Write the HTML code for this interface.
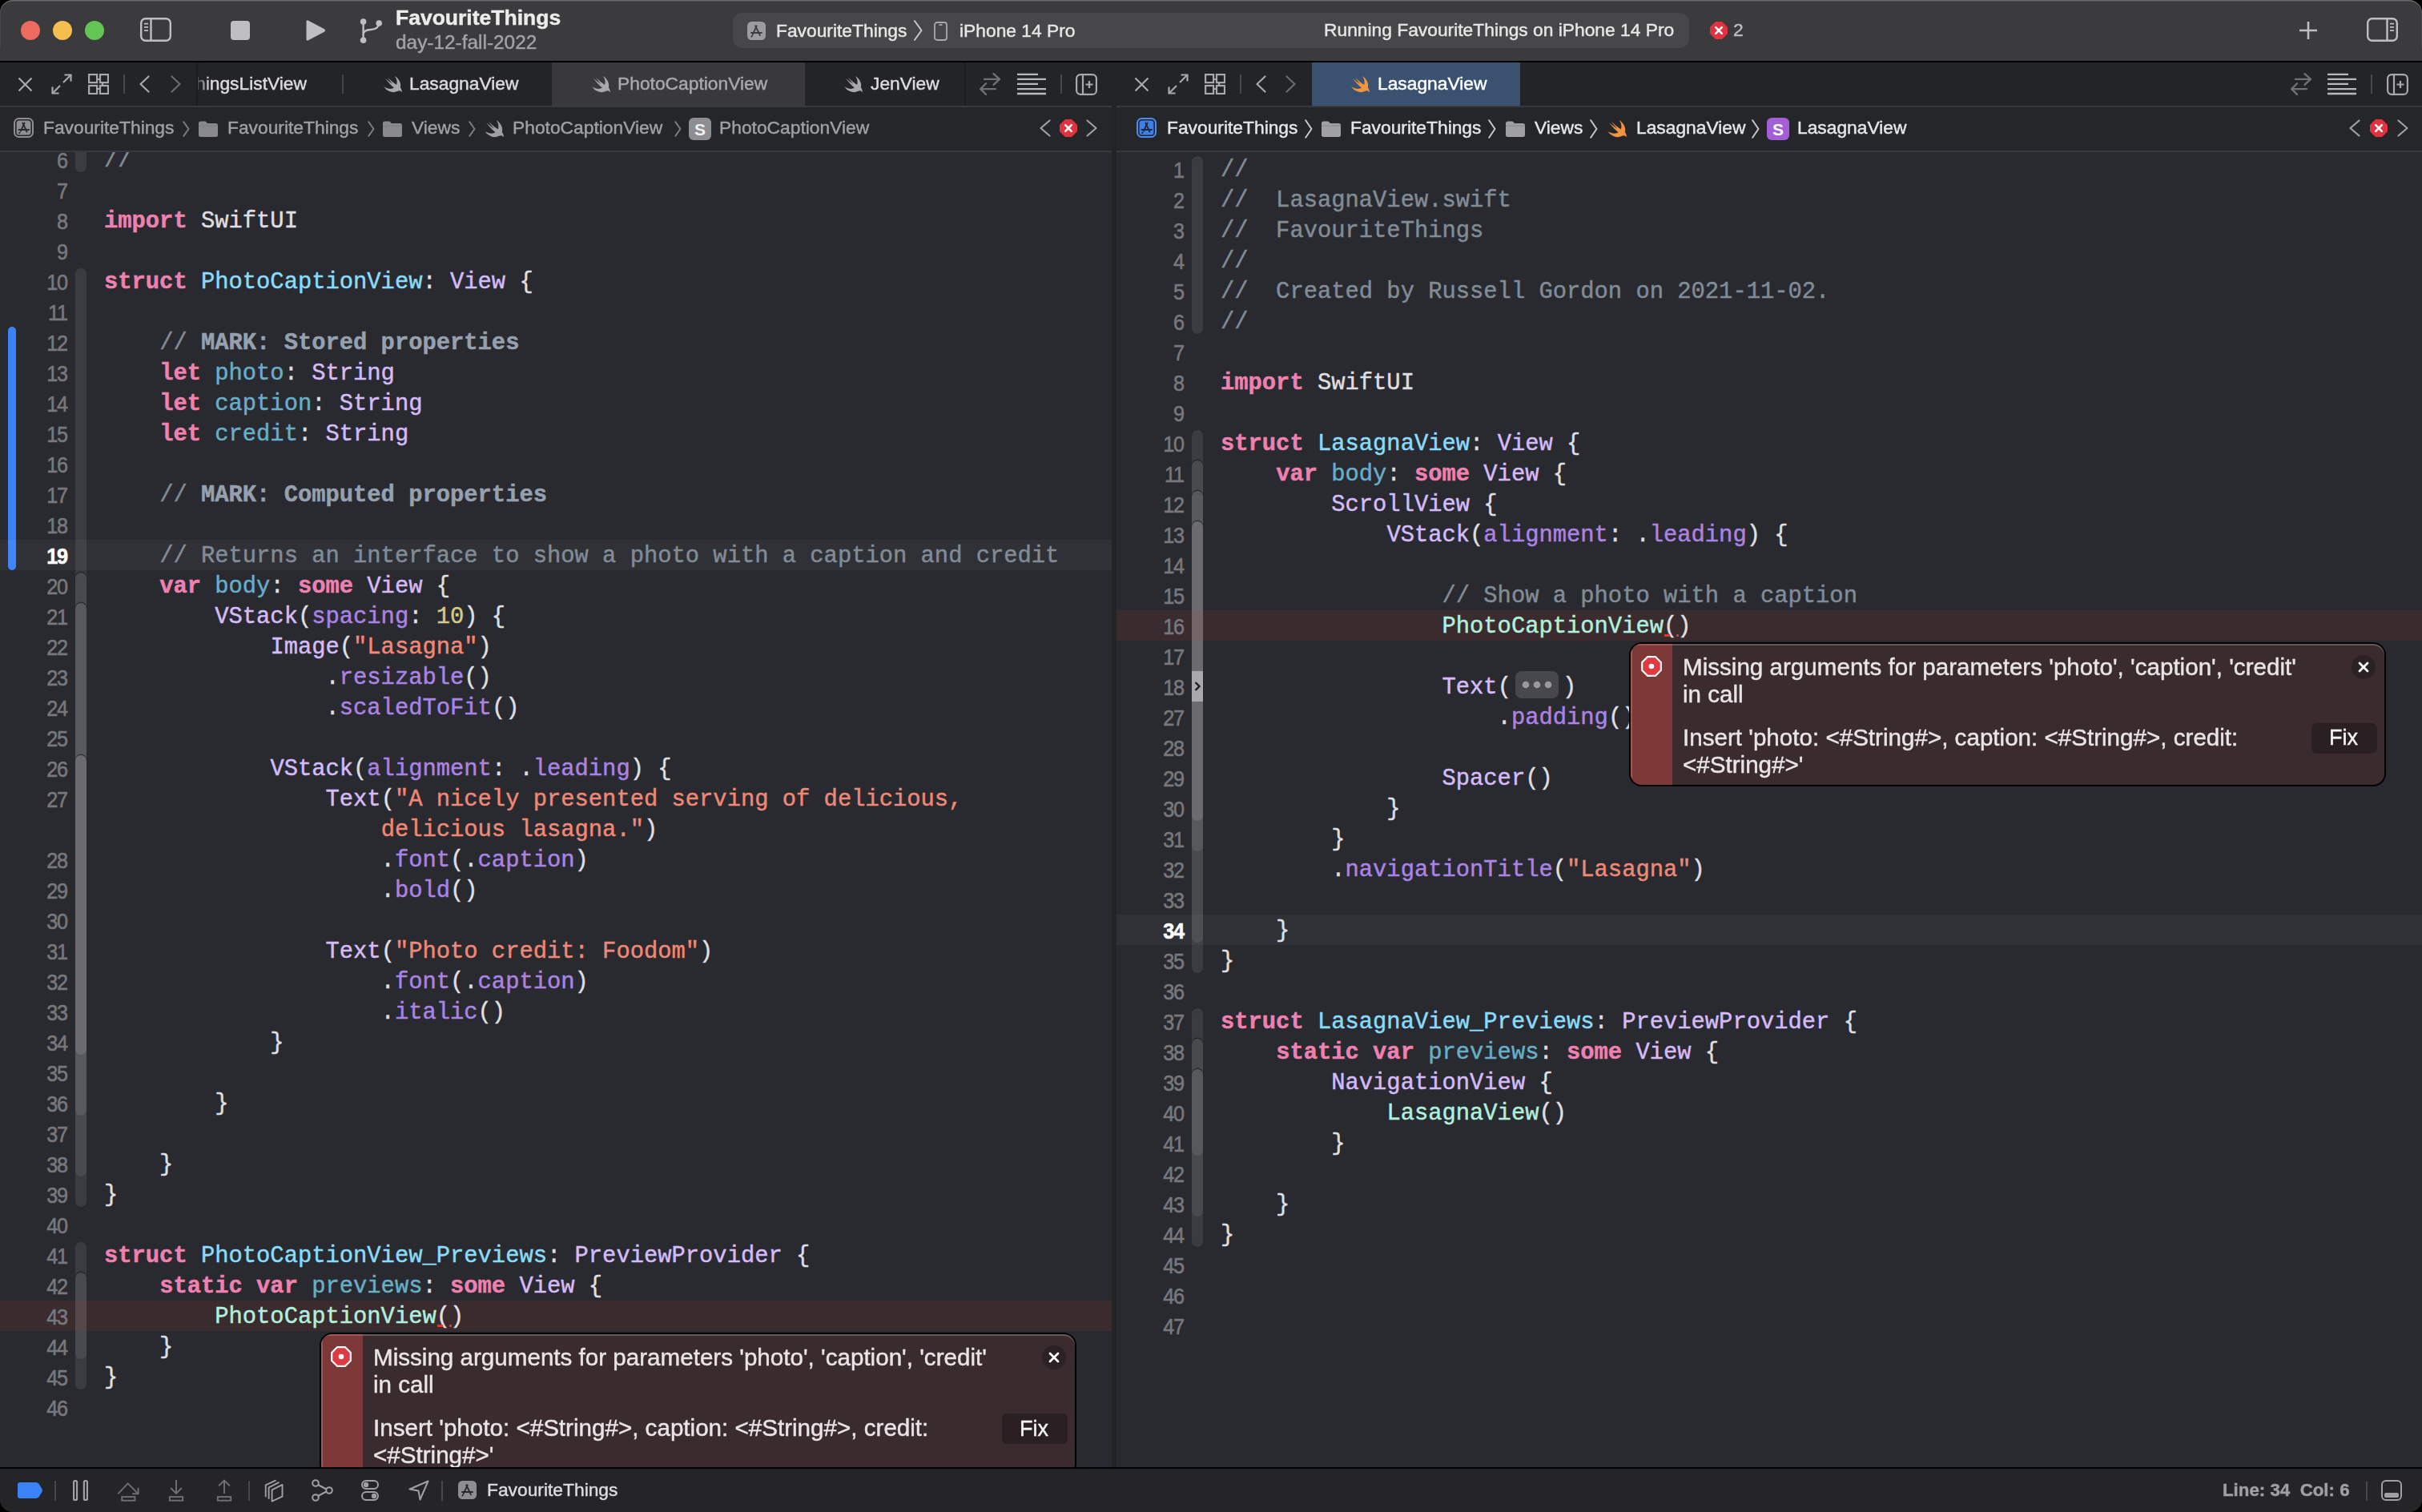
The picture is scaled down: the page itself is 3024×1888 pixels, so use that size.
<!DOCTYPE html>
<html><head><meta charset="utf-8"><style>
html,body{margin:0;padding:0;background:#000;width:3024px;height:1888px;overflow:hidden}
*{box-sizing:border-box}
#win{position:absolute;left:0;top:0;width:3024px;height:1888px;border-radius:16px;overflow:hidden;background:#292a2f;font-family:"Liberation Sans",sans-serif}
.abs{position:absolute}
#toolbar{position:absolute;left:0;top:0;width:3024px;height:76px;background:#3a3a3d;border-top:2px solid #4e4e50}
#tbline{position:absolute;left:0;top:76px;width:3024px;height:2px;background:#000}
.pane{position:absolute;top:78px;height:1754px;overflow:hidden;background:#292a2f}
#lp{left:0;width:1388px}
#rp{left:1394px;width:1630px}
#divider{position:absolute;left:1388px;top:78px;width:6px;height:1754px;background:#1e1e20}
.tabbar{position:absolute;left:0;top:0;width:100%;height:54px;background:#232427}
.sep1{position:absolute;left:0;top:54px;width:100%;height:2px;background:#3a3b3e}
.crumbs{position:absolute;left:0;top:56px;width:100%;height:54px;background:#25262a}
.sep2{position:absolute;left:0;top:110px;width:100%;height:2px;background:#3a3b3e}
.code{position:absolute;left:0;top:112px;width:100%;height:1642px;overflow:hidden}
/* code rows: coordinates are in window space, so offset by pane top (78) + code top (112) = 190 */
.rows{position:absolute;left:0;top:-190px;width:100%;height:2000px}
.ln{position:absolute;left:0;width:84px;-webkit-text-stroke:0.6px currentColor;height:38px;line-height:38px;margin-top:1.5px;text-align:right;font-family:"Liberation Sans",sans-serif;font-size:28px;color:#78787c;letter-spacing:-1.2px;transform:scaleX(0.9);transform-origin:84px 0}
.ln.cur{color:#ffffff;font-weight:700}
.cl{position:absolute;left:130px;height:38px;line-height:38px;margin-top:2px;white-space:pre;font-family:"Liberation Mono",monospace;font-size:28.8px;color:#dfdfe0;-webkit-text-stroke:0.45px currentColor}
.k{color:#ee81b0;font-weight:700}
.t{color:#89dcfb}
.s{color:#d5bbfa}
.p{color:#68aec9}
.f{color:#ab83e5}
.c{color:#818c97}
.m{color:#95a1af;font-weight:700}
.str{color:#ef8876}
.n{color:#d6ca86}
.pt{color:#b1efde}
.hl{position:absolute;left:0;width:100%;height:38px}
.rib{position:absolute;left:94px;width:14px}
.ui{position:absolute;white-space:pre;font-family:"Liberation Sans",sans-serif}
#debug{position:absolute;left:0;top:1832px;width:3024px;height:56px;background:#252528;border-top:2px solid #000}

.fold{display:inline-block;background:#47474c;border-radius:8px;height:34px;width:54px;vertical-align:top;margin:-2px 5px 0 5px;-webkit-text-stroke:0}

#rim{position:absolute;left:0;top:0;width:3024px;height:60px;border-radius:16px 16px 0 0;box-shadow:inset 0 1.5px 0 rgba(255,255,255,0.24), inset 1px 0 0 rgba(255,255,255,0.06), inset -1px 0 0 rgba(255,255,255,0.06);pointer-events:none}
.ui{-webkit-text-stroke:0.45px currentColor;will-change:transform}

</style></head><body>
<div id="win">
<div class="abs" style="left:0px;top:0px;width:3024px;height:76px;background:#3b3b3e"></div>
<div class="abs" style="left:0px;top:76px;width:3024px;height:2px;background:#000"></div>
<div class="abs" style="left:26px;top:26px;width:24px;height:24px;border-radius:50%;background:#ed6a5e"></div>
<div class="abs" style="left:66px;top:26px;width:24px;height:24px;border-radius:50%;background:#f5bf4f"></div>
<div class="abs" style="left:106px;top:26px;width:24px;height:24px;border-radius:50%;background:#62c554"></div>
<svg class="abs" style="left:175px;top:22px;width:39px;height:30px" viewBox="0 0 39 30"><g stroke="#bfbfc1" stroke-width="2.4" fill="none"><rect x="1.2" y="1.2" width="36.6" height="27.6" rx="5.5"/><path d="M13.5 1 V29"/><path d="M5 7.7 H10 M5 11.9 H10 M5 16.1 H10" stroke-width="1.8"/></g></svg>
<div class="abs" style="left:288px;top:26px;width:24px;height:24px;background:#bfbfc1;border-radius:4px"></div>
<svg class="abs" style="left:380px;top:24px;width:27px;height:28px" viewBox="0 0 27 28"><path d="M2.5 3 Q2.5 0.5 5 1.8 L25 12.3 Q27 14 25 15.7 L5 26.2 Q2.5 27.5 2.5 25 Z" fill="#bfbfc1"/></svg>
<svg class="abs" style="left:449px;top:23px;width:29px;height:32px" viewBox="0 0 29 32"><g fill="#bfbfc1"><circle cx="4.6" cy="4" r="3.8"/><circle cx="4.6" cy="27.2" r="3.8"/><circle cx="24.2" cy="6" r="3.8"/></g><g stroke="#bfbfc1" stroke-width="2.4" fill="none"><path d="M4.6 4 V27"/><path d="M4.6 19.5 Q5 14.5 14 14 Q23.5 13.5 24.2 6"/></g></svg>
<div class="ui" style="left:494px;top:8.2px;font-size:26.5px;line-height:29.60px;color:#ececec;font-weight:700">FavouriteThings</div>
<div class="ui" style="left:494px;top:38.6px;font-size:24.4px;line-height:27.25px;color:#a3a3a6;font-weight:400">day-12-fall-2022</div>
<div class="abs" style="left:915px;top:16px;width:1194px;height:44px;background:#47474a;border-radius:12px"></div>
<svg class="abs" style="left:933px;top:27px;width:23px;height:23px" viewBox="0 0 24 24"><rect x="0" y="0" width="24" height="24" rx="5.5" fill="#9c9ca0"/><g stroke="#3d3d40" stroke-width="1.9" stroke-linecap="round" fill="none"><path d="M12.2 5.5 L7 16.8"/><path d="M10.6 5.5 L16.6 17.8"/><path d="M5.2 14.6 H18.8"/><path d="M6.2 18.6 l-0.6 1"/></g></svg>
<div class="ui" style="left:969px;top:25.8px;font-size:22.8px;line-height:25.47px;color:#e6e6e6;font-weight:400">FavouriteThings</div>
<svg class="abs" style="left:1140px;top:24px;width:12px;height:28px" viewBox="0 0 12 28"><path d="M1.5 1.5 L10.5 14 L1.5 26.5" stroke="#c8c8ca" stroke-width="2" fill="none"/></svg>
<svg class="abs" style="left:1166px;top:27px;width:17px;height:24px" viewBox="0 0 17 24"><g stroke="#a9a9ab" stroke-width="1.8" fill="none"><rect x="1" y="1" width="15" height="22" rx="3"/><path d="M6.5 4 H10.5"/></g></svg>
<div class="ui" style="left:1198px;top:25.8px;font-size:22.8px;line-height:25.47px;color:#e6e6e6;font-weight:400">iPhone 14 Pro</div>
<div class="ui" style="left:1653px;top:25.0px;font-size:22.8px;line-height:25.47px;color:#e6e6e6;font-weight:400">Running FavouriteThings on iPhone 14 Pro</div>
<svg class="abs" style="left:2135px;top:27px;width:22px;height:22px" viewBox="0 0 22 22"><path fill="#e0333f" d="M7 0 H15 L22 7 V15 L15 22 H7 L0 15 V7 Z" /><circle cx="11" cy="11" r="10.6" fill="#e0333f"/><path d="M7.2 7.2 L14.8 14.8 M14.8 7.2 L7.2 14.8" stroke="#fff" stroke-width="2.6" stroke-linecap="round"/></svg>
<div class="ui" style="left:2164px;top:25.0px;font-size:22.8px;line-height:25.47px;color:#bdbdbf;font-weight:400">2</div>
<svg class="abs" style="left:2870px;top:26px;width:24px;height:24px" viewBox="0 0 24 24"><path d="M12 1 V23 M1 12 H23" stroke="#bfbfc1" stroke-width="2.6"/></svg>
<svg class="abs" style="left:2955px;top:22px;width:39px;height:30px" viewBox="0 0 39 30"><g stroke="#bfbfc1" stroke-width="2.4" fill="none"><rect x="1.2" y="1.2" width="36.6" height="27.6" rx="5.5"/><path d="M25.5 1 V29"/><path d="M29 7.7 H34 M29 11.9 H34 M29 16.1 H34" stroke-width="1.8"/></g></svg>
<div class="abs" style="left:0px;top:78px;width:1388px;height:54px;background:#232428"></div>
<div class="abs" style="left:1394px;top:78px;width:1630px;height:54px;background:#232428"></div>
<svg class="abs" style="left:22px;top:96px;width:19px;height:19px" viewBox="0 0 19 19"><path d="M1.5 1.5 L17.5 17.5 M17.5 1.5 L1.5 17.5" stroke="#a9a9ab" stroke-width="2.2" fill="none" stroke-linecap="butt"/></svg>
<svg class="abs" style="left:64px;top:92px;width:26px;height:26px" viewBox="0 0 26 26"><g stroke="#a9a9ab" stroke-width="2.2" fill="none"><path d="M15 11 L24.5 1.5"/><path d="M16.5 1.5 H24.5 V9.5"/><path d="M11 15 L1.5 24.5"/><path d="M1.5 16.5 V24.5 H9.5"/></g></svg>
<svg class="abs" style="left:110px;top:92px;width:26px;height:26px" viewBox="0 0 26 26"><g stroke="#a9a9ab" stroke-width="2.2" fill="none"><rect x="1.1" y="1.1" width="10" height="10"/><rect x="15" y="1.1" width="10" height="10"/><rect x="1.1" y="15" width="10" height="10"/><rect x="15" y="15" width="10" height="10"/><path d="M11 7 H16 M18 11 V16 M10 19 H15"/></g></svg>
<div class="abs" style="left:154px;top:93px;width:2px;height:24px;background:#48484b"></div>
<svg class="abs" style="left:174px;top:94px;width:13px;height:22px" viewBox="0 0 13 22"><path d="M11.5 1.5 L1.5 11.0 L11.5 20.5" stroke="#a9a9ab" stroke-width="2.2" fill="none" stroke-linecap="round" stroke-linejoin="round"/></svg>
<svg class="abs" style="left:1416px;top:96px;width:19px;height:19px" viewBox="0 0 19 19"><path d="M1.5 1.5 L17.5 17.5 M17.5 1.5 L1.5 17.5" stroke="#a9a9ab" stroke-width="2.2" fill="none" stroke-linecap="butt"/></svg>
<svg class="abs" style="left:1458px;top:92px;width:26px;height:26px" viewBox="0 0 26 26"><g stroke="#a9a9ab" stroke-width="2.2" fill="none"><path d="M15 11 L24.5 1.5"/><path d="M16.5 1.5 H24.5 V9.5"/><path d="M11 15 L1.5 24.5"/><path d="M1.5 16.5 V24.5 H9.5"/></g></svg>
<svg class="abs" style="left:1504px;top:92px;width:26px;height:26px" viewBox="0 0 26 26"><g stroke="#a9a9ab" stroke-width="2.2" fill="none"><rect x="1.1" y="1.1" width="10" height="10"/><rect x="15" y="1.1" width="10" height="10"/><rect x="1.1" y="15" width="10" height="10"/><rect x="15" y="15" width="10" height="10"/><path d="M11 7 H16 M18 11 V16 M10 19 H15"/></g></svg>
<div class="abs" style="left:1548px;top:93px;width:2px;height:24px;background:#48484b"></div>
<svg class="abs" style="left:1568px;top:94px;width:13px;height:22px" viewBox="0 0 13 22"><path d="M11.5 1.5 L1.5 11.0 L11.5 20.5" stroke="#a9a9ab" stroke-width="2.2" fill="none" stroke-linecap="round" stroke-linejoin="round"/></svg>
<svg class="abs" style="left:213px;top:94px;width:13px;height:22px" viewBox="0 0 13 22"><path d="M1.5 1.5 L11.5 11.0 L1.5 20.5" stroke="#6c6c6f" stroke-width="2.2" fill="none" stroke-linecap="round" stroke-linejoin="round"/></svg>
<svg class="abs" style="left:1605px;top:94px;width:13px;height:22px" viewBox="0 0 13 22"><path d="M1.5 1.5 L11.5 11.0 L1.5 20.5" stroke="#6c6c6f" stroke-width="2.2" fill="none" stroke-linecap="round" stroke-linejoin="round"/></svg>
<div class="abs" style="left:246px;top:78px;width:959px;height:54px;overflow:hidden"><div class="abs" style="left:443px;top:0px;width:316px;height:54px;background:#39393b"></div><div class="ui" style="left:-2px;top:14.1px;font-size:22.8px;line-height:25.47px;color:#dcdcde;font-weight:400">hingsListView</div><div class="abs" style="left:181px;top:15px;width:2px;height:24px;background:#444447"></div><svg class="abs" style="left:231px;top:17px;width:25px;height:21px;overflow:visible" viewBox="0.9 3.4 19.7 16.8"><path fill="#a9a9ab" d="M13.543 3.41c4.114 2.47 6.545 7.162 5.549 11.131-.024.093-.05.181-.076.272l.002.001c2.062 2.538 1.5 5.258 1.236 4.745-1.072-2.086-3.066-1.568-4.088-1.043a6.803 6.803 0 0 1-.281.158l-.02.012-.002.002c-2.115 1.123-4.957 1.205-7.812-.022a12.568 12.568 0 0 1-5.64-4.838c.649.48 1.35.902 2.097 1.252 3.019 1.414 6.051 1.311 8.197-.002C9.651 12.73 7.101 9.67 5.146 7.191a10.628 10.628 0 0 1-1.005-1.384c2.34 2.142 6.038 4.83 7.365 5.576C8.69 8.408 6.208 4.743 6.324 4.86c4.436 4.47 8.528 6.996 8.528 6.996.154.085.27.154.36.213.085-.215.16-.437.224-.668.708-2.588-.09-5.548-1.893-7.992z"/></svg><div class="ui" style="left:265px;top:14.1px;font-size:22.8px;line-height:25.47px;color:#dcdcde;font-weight:400">LasagnaView</div><svg class="abs" style="left:491px;top:17px;width:25px;height:21px;overflow:visible" viewBox="0.9 3.4 19.7 16.8"><path fill="#a9a9ab" d="M13.543 3.41c4.114 2.47 6.545 7.162 5.549 11.131-.024.093-.05.181-.076.272l.002.001c2.062 2.538 1.5 5.258 1.236 4.745-1.072-2.086-3.066-1.568-4.088-1.043a6.803 6.803 0 0 1-.281.158l-.02.012-.002.002c-2.115 1.123-4.957 1.205-7.812-.022a12.568 12.568 0 0 1-5.64-4.838c.649.48 1.35.902 2.097 1.252 3.019 1.414 6.051 1.311 8.197-.002C9.651 12.73 7.101 9.67 5.146 7.191a10.628 10.628 0 0 1-1.005-1.384c2.34 2.142 6.038 4.83 7.365 5.576C8.69 8.408 6.208 4.743 6.324 4.86c4.436 4.47 8.528 6.996 8.528 6.996.154.085.27.154.36.213.085-.215.16-.437.224-.668.708-2.588-.09-5.548-1.893-7.992z"/></svg><div class="ui" style="left:525px;top:14.1px;font-size:22.8px;line-height:25.47px;color:#a9a9ab;font-weight:400">PhotoCaptionView</div><svg class="abs" style="left:806px;top:17px;width:25px;height:21px;overflow:visible" viewBox="0.9 3.4 19.7 16.8"><path fill="#a9a9ab" d="M13.543 3.41c4.114 2.47 6.545 7.162 5.549 11.131-.024.093-.05.181-.076.272l.002.001c2.062 2.538 1.5 5.258 1.236 4.745-1.072-2.086-3.066-1.568-4.088-1.043a6.803 6.803 0 0 1-.281.158l-.02.012-.002.002c-2.115 1.123-4.957 1.205-7.812-.022a12.568 12.568 0 0 1-5.64-4.838c.649.48 1.35.902 2.097 1.252 3.019 1.414 6.051 1.311 8.197-.002C9.651 12.73 7.101 9.67 5.146 7.191a10.628 10.628 0 0 1-1.005-1.384c2.34 2.142 6.038 4.83 7.365 5.576C8.69 8.408 6.208 4.743 6.324 4.86c4.436 4.47 8.528 6.996 8.528 6.996.154.085.27.154.36.213.085-.215.16-.437.224-.668.708-2.588-.09-5.548-1.893-7.992z"/></svg><div class="ui" style="left:841px;top:14.1px;font-size:22.8px;line-height:25.47px;color:#dcdcde;font-weight:400">JenView</div></div>
<div class="abs" style="left:247px;top:78px;width:16px;height:54px;background:linear-gradient(to right, rgba(35,36,40,0.75), rgba(35,36,40,0))"></div>
<div class="abs" style="left:245px;top:78px;width:2px;height:54px;background:#1b1b1d"></div>
<div class="abs" style="left:1204px;top:78px;width:2px;height:54px;background:#1b1b1d"></div>
<svg class="abs" style="left:1223px;top:91px;width:27px;height:28px" viewBox="0 0 27 28"><g stroke="#717175" stroke-width="2.3" fill="none" stroke-linecap="round" stroke-linejoin="round"><path d="M5.9 7.9 H25 M17.5 1.2 L25 7.9 L17.5 14.8"/><path d="M20 20.1 H1.2 M8 13.3 L1.2 20.1 L8 26.9"/></g></svg>
<svg class="abs" style="left:1269px;top:91px;width:38px;height:28px" viewBox="0 0 38 28"><g stroke="#b9b9bb" stroke-width="2.3" fill="none"><path d="M1 1.9 H27 M1 7.9 H37 M1 13.8 H27 M1 20.1 H37 M1 26 H37"/></g></svg>
<div class="abs" style="left:1324px;top:93px;width:2px;height:24px;background:#48484b"></div>
<svg class="abs" style="left:1343px;top:92px;width:27px;height:27px" viewBox="0 0 27 27"><g stroke="#a9a9ab" stroke-width="2.2" fill="none"><rect x="1.1" y="1.1" width="24.8" height="24.8" rx="5"/><path d="M9 1 V26"/><path d="M12.5 13.5 H21.5 M17 9 V18"/></g></svg>
<div class="abs" style="left:1638px;top:78px;width:260px;height:54px;background:#3b5170"></div>
<svg class="abs" style="left:1685px;top:95px;width:25px;height:21px;overflow:visible" viewBox="0.9 3.4 19.7 16.8"><path fill="#ef9440" d="M13.543 3.41c4.114 2.47 6.545 7.162 5.549 11.131-.024.093-.05.181-.076.272l.002.001c2.062 2.538 1.5 5.258 1.236 4.745-1.072-2.086-3.066-1.568-4.088-1.043a6.803 6.803 0 0 1-.281.158l-.02.012-.002.002c-2.115 1.123-4.957 1.205-7.812-.022a12.568 12.568 0 0 1-5.64-4.838c.649.48 1.35.902 2.097 1.252 3.019 1.414 6.051 1.311 8.197-.002C9.651 12.73 7.101 9.67 5.146 7.191a10.628 10.628 0 0 1-1.005-1.384c2.34 2.142 6.038 4.83 7.365 5.576C8.69 8.408 6.208 4.743 6.324 4.86c4.436 4.47 8.528 6.996 8.528 6.996.154.085.27.154.36.213.085-.215.16-.437.224-.668.708-2.588-.09-5.548-1.893-7.992z"/></svg>
<div class="ui" style="left:1720px;top:92.1px;font-size:22.8px;line-height:25.47px;color:#ffffff;font-weight:400">LasagnaView</div>
<svg class="abs" style="left:2860px;top:91px;width:27px;height:28px" viewBox="0 0 27 28"><g stroke="#717175" stroke-width="2.3" fill="none" stroke-linecap="round" stroke-linejoin="round"><path d="M5.9 7.9 H25 M17.5 1.2 L25 7.9 L17.5 14.8"/><path d="M20 20.1 H1.2 M8 13.3 L1.2 20.1 L8 26.9"/></g></svg>
<svg class="abs" style="left:2905px;top:91px;width:38px;height:28px" viewBox="0 0 38 28"><g stroke="#b9b9bb" stroke-width="2.3" fill="none"><path d="M1 1.9 H27 M1 7.9 H37 M1 13.8 H27 M1 20.1 H37 M1 26 H37"/></g></svg>
<div class="abs" style="left:2960px;top:93px;width:2px;height:24px;background:#48484b"></div>
<svg class="abs" style="left:2980px;top:92px;width:27px;height:27px" viewBox="0 0 27 27"><g stroke="#a9a9ab" stroke-width="2.2" fill="none"><rect x="1.1" y="1.1" width="24.8" height="24.8" rx="5"/><path d="M9 1 V26"/><path d="M12.5 13.5 H21.5 M17 9 V18"/></g></svg>
<div class="abs" style="left:0px;top:132px;width:1388px;height:2px;background:#38393c"></div>
<div class="abs" style="left:1394px;top:132px;width:1630px;height:2px;background:#38393c"></div>
<div class="abs" style="left:0px;top:134px;width:1388px;height:54px;background:#25262a"></div>
<div class="abs" style="left:1394px;top:134px;width:1630px;height:54px;background:#25262a"></div>
<div class="abs" style="left:0px;top:188px;width:1388px;height:2px;background:#38393c"></div>
<div class="abs" style="left:1394px;top:188px;width:1630px;height:2px;background:#38393c"></div>
<svg class="abs" style="left:17px;top:147px;width:25px;height:25px" viewBox="0 0 25 25"><rect x="1" y="1" width="23" height="23" rx="5.5" fill="none" stroke="#8e8e92" stroke-width="2"/><rect x="3.6" y="3.6" width="17.8" height="17.8" rx="3.5" fill="#8e8e92"/><g stroke="#2a2a2d" stroke-width="1.8" stroke-linecap="round" fill="none"><path d="M13.6 6.5 L9 16.5"/><path d="M11.3 6.5 L16.5 17.5"/><path d="M6.5 15 H19"/><path d="M7.6 18.4 l-0.5 0.9"/></g></svg>
<div class="ui" style="left:54px;top:146.9px;font-size:22.8px;line-height:25.47px;color:#a0a0a3;font-weight:400">FavouriteThings</div>
<svg class="abs" style="left:228px;top:151px;width:9px;height:20px" viewBox="0 0 9 20"><path d="M1.2 1.2 L7.5 10.0 L1.2 18.8" fill="none" stroke="#7c7c80" stroke-width="2" stroke-linecap="round" stroke-linejoin="round"/></svg>
<svg class="abs" style="left:247px;top:150px;width:26px;height:22px" viewBox="0 0 26 21"><path fill="#8a8a8e" d="M1 3.5 Q1 1 3.5 1 H9.5 L12 3.5 H22.5 Q25 3.5 25 6 V18 Q25 20.5 22.5 20.5 H3.5 Q1 20.5 1 18 Z"/><path fill="#6e6e72" d="M1 6.2 H25 V7 H1 Z" opacity="0.6"/></svg>
<div class="ui" style="left:284px;top:146.9px;font-size:22.8px;line-height:25.47px;color:#a0a0a3;font-weight:400">FavouriteThings</div>
<svg class="abs" style="left:459px;top:151px;width:9px;height:20px" viewBox="0 0 9 20"><path d="M1.2 1.2 L7.5 10.0 L1.2 18.8" fill="none" stroke="#7c7c80" stroke-width="2" stroke-linecap="round" stroke-linejoin="round"/></svg>
<svg class="abs" style="left:477px;top:150px;width:26px;height:22px" viewBox="0 0 26 21"><path fill="#8a8a8e" d="M1 3.5 Q1 1 3.5 1 H9.5 L12 3.5 H22.5 Q25 3.5 25 6 V18 Q25 20.5 22.5 20.5 H3.5 Q1 20.5 1 18 Z"/><path fill="#6e6e72" d="M1 6.2 H25 V7 H1 Z" opacity="0.6"/></svg>
<div class="ui" style="left:514px;top:146.9px;font-size:22.8px;line-height:25.47px;color:#a0a0a3;font-weight:400">Views</div>
<svg class="abs" style="left:585px;top:151px;width:9px;height:20px" viewBox="0 0 9 20"><path d="M1.2 1.2 L7.5 10.0 L1.2 18.8" fill="none" stroke="#7c7c80" stroke-width="2" stroke-linecap="round" stroke-linejoin="round"/></svg>
<svg class="abs" style="left:603px;top:150px;width:26px;height:22px;overflow:visible" viewBox="0.9 3.4 19.7 16.8"><path fill="#a0a0a3" d="M13.543 3.41c4.114 2.47 6.545 7.162 5.549 11.131-.024.093-.05.181-.076.272l.002.001c2.062 2.538 1.5 5.258 1.236 4.745-1.072-2.086-3.066-1.568-4.088-1.043a6.803 6.803 0 0 1-.281.158l-.02.012-.002.002c-2.115 1.123-4.957 1.205-7.812-.022a12.568 12.568 0 0 1-5.64-4.838c.649.48 1.35.902 2.097 1.252 3.019 1.414 6.051 1.311 8.197-.002C9.651 12.73 7.101 9.67 5.146 7.191a10.628 10.628 0 0 1-1.005-1.384c2.34 2.142 6.038 4.83 7.365 5.576C8.69 8.408 6.208 4.743 6.324 4.86c4.436 4.47 8.528 6.996 8.528 6.996.154.085.27.154.36.213.085-.215.16-.437.224-.668.708-2.588-.09-5.548-1.893-7.992z"/></svg>
<div class="ui" style="left:640px;top:146.9px;font-size:22.8px;line-height:25.47px;color:#a0a0a3;font-weight:400">PhotoCaptionView</div>
<svg class="abs" style="left:842px;top:151px;width:9px;height:20px" viewBox="0 0 9 20"><path d="M1.2 1.2 L7.5 10.0 L1.2 18.8" fill="none" stroke="#7c7c80" stroke-width="2" stroke-linecap="round" stroke-linejoin="round"/></svg>
<svg class="abs" style="left:860px;top:147px;width:28px;height:28px" viewBox="0 0 28 28"><rect x="0" y="0" width="28" height="28" rx="6" fill="#8e8e92"/><text x="14" y="21.6" text-anchor="middle" font-family="Liberation Sans" font-weight="700" font-size="21" fill="#f0f0f0">S</text></svg>
<div class="ui" style="left:898px;top:146.9px;font-size:22.8px;line-height:25.47px;color:#a0a0a3;font-weight:400">PhotoCaptionView</div>
<svg class="abs" style="left:1298px;top:149px;width:14px;height:22px" viewBox="0 0 14 22"><path d="M12.5 1.5 L1.5 11.0 L12.5 20.5" stroke="#a0a0a3" stroke-width="2.2" fill="none" stroke-linecap="round" stroke-linejoin="round"/></svg>
<svg class="abs" style="left:1323px;top:149px;width:22px;height:22px" viewBox="0 0 22 22"><path fill="#e0333f" d="M7 0 H15 L22 7 V15 L15 22 H7 L0 15 V7 Z" /><circle cx="11" cy="11" r="10.6" fill="#e0333f"/><path d="M7.2 7.2 L14.8 14.8 M14.8 7.2 L7.2 14.8" stroke="#fff" stroke-width="2.6" stroke-linecap="round"/></svg>
<svg class="abs" style="left:1356px;top:149px;width:14px;height:22px" viewBox="0 0 14 22"><path d="M1.5 1.5 L12.5 11.0 L1.5 20.5" stroke="#a0a0a3" stroke-width="2.2" fill="none" stroke-linecap="round" stroke-linejoin="round"/></svg>
<svg class="abs" style="left:1419px;top:147px;width:25px;height:25px" viewBox="0 0 25 25"><rect x="1" y="1" width="23" height="23" rx="5.5" fill="none" stroke="#4a8cf5" stroke-width="2"/><rect x="3.6" y="3.6" width="17.8" height="17.8" rx="3.5" fill="#3f7fe8"/><g stroke="#1e2a40" stroke-width="1.8" stroke-linecap="round" fill="none"><path d="M13.6 6.5 L9 16.5"/><path d="M11.3 6.5 L16.5 17.5"/><path d="M6.5 15 H19"/><path d="M7.6 18.4 l-0.5 0.9"/></g></svg>
<div class="ui" style="left:1457px;top:146.9px;font-size:22.8px;line-height:25.47px;color:#e6e6e8;font-weight:400">FavouriteThings</div>
<svg class="abs" style="left:1629px;top:149px;width:10px;height:24px" viewBox="0 0 10 24"><path d="M1.2 1.2 L8.5 12.0 L1.2 22.8" fill="none" stroke="#c8c8ca" stroke-width="2" stroke-linecap="round" stroke-linejoin="round"/></svg>
<svg class="abs" style="left:1649px;top:150px;width:26px;height:22px" viewBox="0 0 26 21"><path fill="#a0a0a4" d="M1 3.5 Q1 1 3.5 1 H9.5 L12 3.5 H22.5 Q25 3.5 25 6 V18 Q25 20.5 22.5 20.5 H3.5 Q1 20.5 1 18 Z"/><path fill="#6e6e72" d="M1 6.2 H25 V7 H1 Z" opacity="0.6"/></svg>
<div class="ui" style="left:1686px;top:146.9px;font-size:22.8px;line-height:25.47px;color:#e6e6e8;font-weight:400">FavouriteThings</div>
<svg class="abs" style="left:1858px;top:149px;width:10px;height:24px" viewBox="0 0 10 24"><path d="M1.2 1.2 L8.5 12.0 L1.2 22.8" fill="none" stroke="#c8c8ca" stroke-width="2" stroke-linecap="round" stroke-linejoin="round"/></svg>
<svg class="abs" style="left:1879px;top:150px;width:26px;height:22px" viewBox="0 0 26 21"><path fill="#a0a0a4" d="M1 3.5 Q1 1 3.5 1 H9.5 L12 3.5 H22.5 Q25 3.5 25 6 V18 Q25 20.5 22.5 20.5 H3.5 Q1 20.5 1 18 Z"/><path fill="#6e6e72" d="M1 6.2 H25 V7 H1 Z" opacity="0.6"/></svg>
<div class="ui" style="left:1916px;top:146.9px;font-size:22.8px;line-height:25.47px;color:#e6e6e8;font-weight:400">Views</div>
<svg class="abs" style="left:1985px;top:149px;width:10px;height:24px" viewBox="0 0 10 24"><path d="M1.2 1.2 L8.5 12.0 L1.2 22.8" fill="none" stroke="#c8c8ca" stroke-width="2" stroke-linecap="round" stroke-linejoin="round"/></svg>
<svg class="abs" style="left:2005px;top:150px;width:26px;height:22px;overflow:visible" viewBox="0.9 3.4 19.7 16.8"><path fill="#ef9440" d="M13.543 3.41c4.114 2.47 6.545 7.162 5.549 11.131-.024.093-.05.181-.076.272l.002.001c2.062 2.538 1.5 5.258 1.236 4.745-1.072-2.086-3.066-1.568-4.088-1.043a6.803 6.803 0 0 1-.281.158l-.02.012-.002.002c-2.115 1.123-4.957 1.205-7.812-.022a12.568 12.568 0 0 1-5.64-4.838c.649.48 1.35.902 2.097 1.252 3.019 1.414 6.051 1.311 8.197-.002C9.651 12.73 7.101 9.67 5.146 7.191a10.628 10.628 0 0 1-1.005-1.384c2.34 2.142 6.038 4.83 7.365 5.576C8.69 8.408 6.208 4.743 6.324 4.86c4.436 4.47 8.528 6.996 8.528 6.996.154.085.27.154.36.213.085-.215.16-.437.224-.668.708-2.588-.09-5.548-1.893-7.992z"/></svg>
<div class="ui" style="left:2043px;top:146.9px;font-size:22.8px;line-height:25.47px;color:#e6e6e8;font-weight:400">LasagnaView</div>
<svg class="abs" style="left:2187px;top:149px;width:10px;height:24px" viewBox="0 0 10 24"><path d="M1.2 1.2 L8.5 12.0 L1.2 22.8" fill="none" stroke="#c8c8ca" stroke-width="2" stroke-linecap="round" stroke-linejoin="round"/></svg>
<svg class="abs" style="left:2206px;top:147px;width:28px;height:28px" viewBox="0 0 28 28"><rect x="0" y="0" width="28" height="28" rx="6" fill="#a35ed8"/><text x="14" y="21.6" text-anchor="middle" font-family="Liberation Sans" font-weight="700" font-size="21" fill="#ffffff">S</text></svg>
<div class="ui" style="left:2244px;top:146.9px;font-size:22.8px;line-height:25.47px;color:#e6e6e8;font-weight:400">LasagnaView</div>
<svg class="abs" style="left:2933px;top:149px;width:14px;height:22px" viewBox="0 0 14 22"><path d="M12.5 1.5 L1.5 11.0 L12.5 20.5" stroke="#a0a0a3" stroke-width="2.2" fill="none" stroke-linecap="round" stroke-linejoin="round"/></svg>
<svg class="abs" style="left:2959px;top:149px;width:22px;height:22px" viewBox="0 0 22 22"><path fill="#e0333f" d="M7 0 H15 L22 7 V15 L15 22 H7 L0 15 V7 Z" /><circle cx="11" cy="11" r="10.6" fill="#e0333f"/><path d="M7.2 7.2 L14.8 14.8 M14.8 7.2 L7.2 14.8" stroke="#fff" stroke-width="2.6" stroke-linecap="round"/></svg>
<svg class="abs" style="left:2993px;top:149px;width:14px;height:22px" viewBox="0 0 14 22"><path d="M1.5 1.5 L12.5 11.0 L1.5 20.5" stroke="#a0a0a3" stroke-width="2.2" fill="none" stroke-linecap="round" stroke-linejoin="round"/></svg>
<div class="abs" style="left:0;top:190px;width:1388px;height:1642px;overflow:hidden;background:#292a2f">
 <div class="abs" style="left:0;top:-190px;width:1388px;height:2100px">
  <div class="abs" style="left:10px;top:408px;width:10px;height:304px;border-radius:5px;background:#3b82f6"></div>
  <div class="rib" style="top:183px;height:32px;background:#3b3c41;border-radius:7px"></div>
<div class="rib" style="top:335px;height:1172px;background:#3b3c41;border-radius:7px"></div>
<div class="rib" style="top:715px;height:754px;background:#494a4e;border-radius:7px;box-shadow:0 -1.5px 0 rgba(20,20,22,0.55)"></div>
<div class="rib" style="top:753px;height:640px;background:#58595d;border-radius:7px;box-shadow:0 -1.5px 0 rgba(20,20,22,0.55)"></div>
<div class="rib" style="top:943px;height:374px;background:#6c6c70;border-radius:7px;box-shadow:0 -1.5px 0 rgba(20,20,22,0.55)"></div>
<div class="rib" style="top:1551px;height:184px;background:#3b3c41;border-radius:7px"></div>
<div class="rib" style="top:1589px;height:108px;background:#494a4e;border-radius:7px;box-shadow:0 -1.5px 0 rgba(20,20,22,0.55)"></div>
  <div class="hl" style="top:674px;background:rgba(255,255,255,0.035)"></div>
  <div class="hl" style="top:1624px;background:rgba(183,59,47,0.12)"></div>
  <div class="ln" style="top:180px">6</div>
<div class="cl" style="top:180px"><span class="c">//</span></div>
<div class="ln" style="top:218px">7</div>
<div class="cl" style="top:218px"></div>
<div class="ln" style="top:256px">8</div>
<div class="cl" style="top:256px"><span class="k">import</span> SwiftUI</div>
<div class="ln" style="top:294px">9</div>
<div class="cl" style="top:294px"></div>
<div class="ln" style="top:332px">10</div>
<div class="cl" style="top:332px"><span class="k">struct</span> <span class="t">PhotoCaptionView</span>: <span class="s">View</span> {</div>
<div class="ln" style="top:370px">11</div>
<div class="cl" style="top:370px"></div>
<div class="ln" style="top:408px">12</div>
<div class="cl" style="top:408px">    <span class="c">//</span> <span class="m">MARK: Stored properties</span></div>
<div class="ln" style="top:446px">13</div>
<div class="cl" style="top:446px">    <span class="k">let</span> <span class="p">photo</span>: <span class="s">String</span></div>
<div class="ln" style="top:484px">14</div>
<div class="cl" style="top:484px">    <span class="k">let</span> <span class="p">caption</span>: <span class="s">String</span></div>
<div class="ln" style="top:522px">15</div>
<div class="cl" style="top:522px">    <span class="k">let</span> <span class="p">credit</span>: <span class="s">String</span></div>
<div class="ln" style="top:560px">16</div>
<div class="cl" style="top:560px"></div>
<div class="ln" style="top:598px">17</div>
<div class="cl" style="top:598px">    <span class="c">//</span> <span class="m">MARK: Computed properties</span></div>
<div class="ln" style="top:636px">18</div>
<div class="cl" style="top:636px"></div>
<div class="ln cur" style="top:674px">19</div>
<div class="cl" style="top:674px">    <span class="c">// Returns an interface to show a photo with a caption and credit</span></div>
<div class="ln" style="top:712px">20</div>
<div class="cl" style="top:712px">    <span class="k">var</span> <span class="p">body</span>: <span class="k">some</span> <span class="s">View</span> {</div>
<div class="ln" style="top:750px">21</div>
<div class="cl" style="top:750px">        <span class="s">VStack</span>(<span class="f">spacing</span>: <span class="n">10</span>) {</div>
<div class="ln" style="top:788px">22</div>
<div class="cl" style="top:788px">            <span class="s">Image</span>(<span class="str">&quot;Lasagna&quot;</span>)</div>
<div class="ln" style="top:826px">23</div>
<div class="cl" style="top:826px">                .<span class="f">resizable</span>()</div>
<div class="ln" style="top:864px">24</div>
<div class="cl" style="top:864px">                .<span class="f">scaledToFit</span>()</div>
<div class="ln" style="top:902px">25</div>
<div class="cl" style="top:902px"></div>
<div class="ln" style="top:940px">26</div>
<div class="cl" style="top:940px">            <span class="s">VStack</span>(<span class="f">alignment</span>: .<span class="f">leading</span>) {</div>
<div class="ln" style="top:978px">27</div>
<div class="cl" style="top:978px">                <span class="s">Text</span>(<span class="str">&quot;A nicely presented serving of delicious,</span></div>
<div class="ln" style="top:1016px"></div>
<div class="cl" style="top:1016px">                    <span class="str">delicious lasagna.&quot;</span>)</div>
<div class="ln" style="top:1054px">28</div>
<div class="cl" style="top:1054px">                    .<span class="f">font</span>(.<span class="f">caption</span>)</div>
<div class="ln" style="top:1092px">29</div>
<div class="cl" style="top:1092px">                    .<span class="f">bold</span>()</div>
<div class="ln" style="top:1130px">30</div>
<div class="cl" style="top:1130px"></div>
<div class="ln" style="top:1168px">31</div>
<div class="cl" style="top:1168px">                <span class="s">Text</span>(<span class="str">&quot;Photo credit: Foodom&quot;</span>)</div>
<div class="ln" style="top:1206px">32</div>
<div class="cl" style="top:1206px">                    .<span class="f">font</span>(.<span class="f">caption</span>)</div>
<div class="ln" style="top:1244px">33</div>
<div class="cl" style="top:1244px">                    .<span class="f">italic</span>()</div>
<div class="ln" style="top:1282px">34</div>
<div class="cl" style="top:1282px">            }</div>
<div class="ln" style="top:1320px">35</div>
<div class="cl" style="top:1320px"></div>
<div class="ln" style="top:1358px">36</div>
<div class="cl" style="top:1358px">        }</div>
<div class="ln" style="top:1396px">37</div>
<div class="cl" style="top:1396px"></div>
<div class="ln" style="top:1434px">38</div>
<div class="cl" style="top:1434px">    }</div>
<div class="ln" style="top:1472px">39</div>
<div class="cl" style="top:1472px">}</div>
<div class="ln" style="top:1510px">40</div>
<div class="cl" style="top:1510px"></div>
<div class="ln" style="top:1548px">41</div>
<div class="cl" style="top:1548px"><span class="k">struct</span> <span class="t">PhotoCaptionView_Previews</span>: <span class="s">PreviewProvider</span> {</div>
<div class="ln" style="top:1586px">42</div>
<div class="cl" style="top:1586px">    <span class="k">static</span> <span class="k">var</span> <span class="p">previews</span>: <span class="k">some</span> <span class="s">View</span> {</div>
<div class="ln" style="top:1624px">43</div>
<div class="cl" style="top:1624px">        <span class="pt">PhotoCaptionView</span>()</div>
<div class="ln" style="top:1662px">44</div>
<div class="cl" style="top:1662px">    }</div>
<div class="ln" style="top:1700px">45</div>
<div class="cl" style="top:1700px">}</div>
<div class="ln" style="top:1738px">46</div>
<div class="cl" style="top:1738px"></div>
  <div class="abs" style="left:546px;top:1654px;width:7px;height:3px;background:#e2352b"></div>
  <div class="abs" style="left:561px;top:1654px;width:3px;height:3px;background:#e2352b"></div>
 </div>
</div>
<div class="abs" style="left:1388px;top:78px;width:6px;height:1754px;background:#242424"></div>
<div class="abs" style="left:1394px;top:190px;width:1630px;height:1642px;overflow:hidden;background:#292a2f">
 <div class="abs" style="left:0;top:-190px;width:1630px;height:2100px">
  <div class="rib" style="top:195px;height:222px;background:#3b3c41;border-radius:7px"></div>
<div class="rib" style="top:537px;height:678px;background:#3b3c41;border-radius:7px"></div>
<div class="rib" style="top:575px;height:602px;background:#494a4e;border-radius:7px;box-shadow:0 -1.5px 0 rgba(20,20,22,0.55)"></div>
<div class="rib" style="top:613px;height:450px;background:#58595d;border-radius:7px;box-shadow:0 -1.5px 0 rgba(20,20,22,0.55)"></div>
<div class="rib" style="top:651px;height:374px;background:#6c6c70;border-radius:7px;box-shadow:0 -1.5px 0 rgba(20,20,22,0.55)"></div>
<div class="rib" style="top:1259px;height:298px;background:#3b3c41;border-radius:7px"></div>
<div class="rib" style="top:1297px;height:222px;background:#494a4e;border-radius:7px;box-shadow:0 -1.5px 0 rgba(20,20,22,0.55)"></div>
<div class="rib" style="top:1335px;height:108px;background:#58595d;border-radius:7px;box-shadow:0 -1.5px 0 rgba(20,20,22,0.55)"></div>
  <div class="hl" style="top:1142px;background:rgba(255,255,255,0.035)"></div>
  <div class="hl" style="top:762px;background:rgba(183,59,47,0.12)"></div>
  <div class="ln" style="top:192px">1</div>
<div class="cl" style="top:192px"><span class="c">//</span></div>
<div class="ln" style="top:230px">2</div>
<div class="cl" style="top:230px"><span class="c">//  LasagnaView.swift</span></div>
<div class="ln" style="top:268px">3</div>
<div class="cl" style="top:268px"><span class="c">//  FavouriteThings</span></div>
<div class="ln" style="top:306px">4</div>
<div class="cl" style="top:306px"><span class="c">//</span></div>
<div class="ln" style="top:344px">5</div>
<div class="cl" style="top:344px"><span class="c">//  Created by Russell Gordon on 2021-11-02.</span></div>
<div class="ln" style="top:382px">6</div>
<div class="cl" style="top:382px"><span class="c">//</span></div>
<div class="ln" style="top:420px">7</div>
<div class="cl" style="top:420px"></div>
<div class="ln" style="top:458px">8</div>
<div class="cl" style="top:458px"><span class="k">import</span> SwiftUI</div>
<div class="ln" style="top:496px">9</div>
<div class="cl" style="top:496px"></div>
<div class="ln" style="top:534px">10</div>
<div class="cl" style="top:534px"><span class="k">struct</span> <span class="t">LasagnaView</span>: <span class="s">View</span> {</div>
<div class="ln" style="top:572px">11</div>
<div class="cl" style="top:572px">    <span class="k">var</span> <span class="p">body</span>: <span class="k">some</span> <span class="s">View</span> {</div>
<div class="ln" style="top:610px">12</div>
<div class="cl" style="top:610px">        <span class="s">ScrollView</span> {</div>
<div class="ln" style="top:648px">13</div>
<div class="cl" style="top:648px">            <span class="s">VStack</span>(<span class="f">alignment</span>: .<span class="f">leading</span>) {</div>
<div class="ln" style="top:686px">14</div>
<div class="cl" style="top:686px"></div>
<div class="ln" style="top:724px">15</div>
<div class="cl" style="top:724px">                <span class="c">// Show a photo with a caption</span></div>
<div class="ln" style="top:762px">16</div>
<div class="cl" style="top:762px">                <span class="pt">PhotoCaptionView</span>()</div>
<div class="ln" style="top:800px">17</div>
<div class="cl" style="top:800px"></div>
<div class="ln" style="top:838px">18</div>
<div class="cl" style="top:838px">                <span class="s">Text</span>(<span class="fold"><svg width="54" height="34" viewBox="0 0 54 34" style="display:block"><circle cx="13" cy="17" r="4.3" fill="#9a9a9e"/><circle cx="27" cy="17" r="4.3" fill="#9a9a9e"/><circle cx="41" cy="17" r="4.3" fill="#9a9a9e"/></svg></span>)</div>
<div class="ln" style="top:876px">27</div>
<div class="cl" style="top:876px">                    .<span class="f">padding</span>()</div>
<div class="ln" style="top:914px">28</div>
<div class="cl" style="top:914px"></div>
<div class="ln" style="top:952px">29</div>
<div class="cl" style="top:952px">                <span class="s">Spacer</span>()</div>
<div class="ln" style="top:990px">30</div>
<div class="cl" style="top:990px">            }</div>
<div class="ln" style="top:1028px">31</div>
<div class="cl" style="top:1028px">        }</div>
<div class="ln" style="top:1066px">32</div>
<div class="cl" style="top:1066px">        .<span class="f">navigationTitle</span>(<span class="str">&quot;Lasagna&quot;</span>)</div>
<div class="ln" style="top:1104px">33</div>
<div class="cl" style="top:1104px"></div>
<div class="ln cur" style="top:1142px">34</div>
<div class="cl" style="top:1142px">    }</div>
<div class="ln" style="top:1180px">35</div>
<div class="cl" style="top:1180px">}</div>
<div class="ln" style="top:1218px">36</div>
<div class="cl" style="top:1218px"></div>
<div class="ln" style="top:1256px">37</div>
<div class="cl" style="top:1256px"><span class="k">struct</span> <span class="t">LasagnaView_Previews</span>: <span class="s">PreviewProvider</span> {</div>
<div class="ln" style="top:1294px">38</div>
<div class="cl" style="top:1294px">    <span class="k">static</span> <span class="k">var</span> <span class="p">previews</span>: <span class="k">some</span> <span class="s">View</span> {</div>
<div class="ln" style="top:1332px">39</div>
<div class="cl" style="top:1332px">        <span class="s">NavigationView</span> {</div>
<div class="ln" style="top:1370px">40</div>
<div class="cl" style="top:1370px">            <span class="pt">LasagnaView</span>()</div>
<div class="ln" style="top:1408px">41</div>
<div class="cl" style="top:1408px">        }</div>
<div class="ln" style="top:1446px">42</div>
<div class="cl" style="top:1446px"></div>
<div class="ln" style="top:1484px">43</div>
<div class="cl" style="top:1484px">    }</div>
<div class="ln" style="top:1522px">44</div>
<div class="cl" style="top:1522px">}</div>
<div class="ln" style="top:1560px">45</div>
<div class="cl" style="top:1560px"></div>
<div class="ln" style="top:1598px">46</div>
<div class="cl" style="top:1598px"></div>
<div class="ln" style="top:1636px">47</div>
<div class="cl" style="top:1636px"></div>
  <div class="abs" style="left:94px;top:838px;width:14px;height:38px;background:#a9a9ab"></div>
  <svg class="abs" style="left:96px;top:850px;width:10px;height:14px" viewBox="0 0 10 14"><path d="M2.5 2 L7.5 7 L2.5 12" stroke="#1e1e20" stroke-width="2.4" fill="none"/></svg>
  <div class="abs" style="left:684px;top:792px;width:7px;height:3px;background:#e2352b"></div>
  <div class="abs" style="left:699px;top:792px;width:3px;height:3px;background:#e2352b"></div>
 </div>
</div>
<div class="abs" style="left:2034px;top:801.7px;width:945px;height:180px;overflow:hidden"><div class="abs" style="left:0;top:0;width:945px;height:180px;border-radius:16px;background:#000"></div><div class="abs" style="left:2px;top:2px;width:941px;height:176px;border-radius:14px;background:#3a2b2f;overflow:hidden;box-shadow:inset 0 2px 0 rgba(255,255,255,0.22), inset 2px 0 0 rgba(255,255,255,0.12)"><div class="abs" style="left:0;top:0;width:52px;height:180px;background:#7d3937;box-shadow:inset 2px 2px 0 rgba(255,170,160,0.28)"></div></div><svg class="abs" style="left:14.5px;top:17px;width:26px;height:26px" viewBox="0 0 26 26"><path d="M8 1.2 H18 L24.8 8 V18 L18 24.8 H8 L1.2 18 V8 Z" fill="#de3a42" stroke="#fff" stroke-width="2.2" stroke-linejoin="round"/><circle cx="13" cy="13" r="3.3" fill="#fff"/></svg><div class="ui" style="left:67px;top:14.2px;font-size:29.6px;line-height:33.06px;color:#e9e4e5;font-weight:400">Missing arguments for parameters &#x27;photo&#x27;, &#x27;caption&#x27;, &#x27;credit&#x27;</div><div class="ui" style="left:67px;top:48.2px;font-size:29.6px;line-height:33.06px;color:#e9e4e5;font-weight:400">in call</div><div class="ui" style="left:67px;top:102.2px;font-size:29.6px;line-height:33.06px;color:#e9e4e5;font-weight:400">Insert &#x27;photo: &lt;#String#&gt;, caption: &lt;#String#&gt;, credit:</div><div class="ui" style="left:67px;top:136.2px;font-size:29.6px;line-height:33.06px;color:#e9e4e5;font-weight:400">&lt;#String#&gt;&#x27;</div><div class="abs" style="left:852px;top:101px;width:82px;height:38px;border-radius:7px;background:#2a2023"></div><div class="ui" style="left:874px;top:104.6px;font-size:27px;line-height:30.16px;color:#f2f2f2;font-weight:400">Fix</div><div class="abs" style="left:902px;top:16px;width:30px;height:30px;border-radius:50%;background:#2c2225"></div><svg class="abs" style="left:910px;top:24px;width:14px;height:14px" viewBox="0 0 14 14"><path d="M2 2 L12 12 M12 2 L2 12" stroke="#fff" stroke-width="2.8" stroke-linecap="round"/></svg></div>
<div class="abs" style="left:398.5px;top:1664px;width:945px;height:168px;overflow:hidden"><div class="abs" style="left:0;top:0;width:945px;height:180px;border-radius:16px;background:#000"></div><div class="abs" style="left:2px;top:2px;width:941px;height:176px;border-radius:14px;background:#3a2b2f;overflow:hidden;box-shadow:inset 0 2px 0 rgba(255,255,255,0.22), inset 2px 0 0 rgba(255,255,255,0.12)"><div class="abs" style="left:0;top:0;width:52px;height:180px;background:#7d3937;box-shadow:inset 2px 2px 0 rgba(255,170,160,0.28)"></div></div><svg class="abs" style="left:14.5px;top:17px;width:26px;height:26px" viewBox="0 0 26 26"><path d="M8 1.2 H18 L24.8 8 V18 L18 24.8 H8 L1.2 18 V8 Z" fill="#de3a42" stroke="#fff" stroke-width="2.2" stroke-linejoin="round"/><circle cx="13" cy="13" r="3.3" fill="#fff"/></svg><div class="ui" style="left:67px;top:14.2px;font-size:29.6px;line-height:33.06px;color:#e9e4e5;font-weight:400">Missing arguments for parameters &#x27;photo&#x27;, &#x27;caption&#x27;, &#x27;credit&#x27;</div><div class="ui" style="left:67px;top:48.2px;font-size:29.6px;line-height:33.06px;color:#e9e4e5;font-weight:400">in call</div><div class="ui" style="left:67px;top:102.2px;font-size:29.6px;line-height:33.06px;color:#e9e4e5;font-weight:400">Insert &#x27;photo: &lt;#String#&gt;, caption: &lt;#String#&gt;, credit:</div><div class="ui" style="left:67px;top:136.2px;font-size:29.6px;line-height:33.06px;color:#e9e4e5;font-weight:400">&lt;#String#&gt;&#x27;</div><div class="abs" style="left:852px;top:101px;width:82px;height:38px;border-radius:7px;background:#2a2023"></div><div class="ui" style="left:874px;top:104.6px;font-size:27px;line-height:30.16px;color:#f2f2f2;font-weight:400">Fix</div><div class="abs" style="left:902px;top:16px;width:30px;height:30px;border-radius:50%;background:#2c2225"></div><svg class="abs" style="left:910px;top:24px;width:14px;height:14px" viewBox="0 0 14 14"><path d="M2 2 L12 12 M12 2 L2 12" stroke="#fff" stroke-width="2.8" stroke-linecap="round"/></svg></div>
<div class="abs" style="left:0px;top:1832px;width:3024px;height:2px;background:#000"></div>
<div class="abs" style="left:0px;top:1834px;width:3024px;height:54px;background:#252528"></div>
<svg class="abs" style="left:22px;top:1851px;width:31px;height:20px" viewBox="0 0 31 20"><path d="M3 0 H23 Q25 0 26.5 1.8 L30.5 8.2 Q31.5 10 30.5 11.8 L26.5 18.2 Q25 20 23 20 H3 Q0 20 0 17 V3 Q0 0 3 0 Z" fill="#3b82f6"/></svg>
<div class="abs" style="left:68px;top:1849px;width:2px;height:25px;background:#48484b"></div>
<svg class="abs" style="left:91px;top:1848px;width:19px;height:26px" viewBox="0 0 19 26"><g stroke="#a0a0a3" stroke-width="2.2" fill="none"><rect x="1.1" y="1.1" width="4" height="23.8" rx="1.5"/><rect x="13.9" y="1.1" width="4" height="23.8" rx="1.5"/></g></svg>
<svg class="abs" style="left:146px;top:1847px;width:29px;height:29px" viewBox="0 0 29 29"><g stroke="#707074" stroke-width="1.9" fill="none" stroke-linecap="butt" stroke-linejoin="miter"><path d="M1.3 18.3 L13.7 5.4 L26.6 18.3"/><path d="M26.6 10.8 V18.3 H19.2"/><rect x="6.2" y="22.1" width="16.2" height="4.6"/></g></svg>
<svg class="abs" style="left:210px;top:1847px;width:20px;height:29px" viewBox="0 0 20 29"><g stroke="#707074" stroke-width="1.9" fill="none"><path d="M10 1 V17.5 M3.2 11 L10 17.8 L16.8 11"/><rect x="1.8" y="22.1" width="16.4" height="4.6"/></g></svg>
<svg class="abs" style="left:270px;top:1847px;width:20px;height:29px" viewBox="0 0 20 29"><g stroke="#707074" stroke-width="1.9" fill="none"><path d="M10 18 V2 M3.2 8.2 L10 1.5 L16.8 8.2"/><rect x="1.8" y="22.1" width="16.4" height="4.6"/></g></svg>
<div class="abs" style="left:310px;top:1849px;width:2px;height:25px;background:#48484b"></div>
<svg class="abs" style="left:330px;top:1847px;width:24px;height:29px" viewBox="0 0 24 29"><g stroke="#a0a0a3" stroke-width="1.9" fill="none" stroke-linejoin="round"><path d="M9.6 13.3 L22.5 6.9 V21.7 L9.6 27.7 Z"/><path d="M5.6 24.7 V10.3 L18.5 3.9"/><path d="M1.7 22.2 V7.4 L14.6 1.4"/></g></svg>
<svg class="abs" style="left:389px;top:1847px;width:27px;height:28px" viewBox="0 0 27 28"><g stroke="#a0a0a3" stroke-width="2" fill="none"><circle cx="5" cy="5" r="3.8"/><circle cx="5" cy="23" r="3.8"/><circle cx="22" cy="14" r="3.8"/><path d="M8 7 L18.5 12.5 M8 21 L18.5 15.5"/></g></svg>
<svg class="abs" style="left:451px;top:1848px;width:22px;height:26px" viewBox="0 0 22 26"><g stroke="#a0a0a3" stroke-width="2" fill="none"><rect x="1" y="1" width="20" height="10" rx="5"/><rect x="1" y="15" width="20" height="10" rx="5"/></g><circle cx="6" cy="6" r="3.2" fill="#a0a0a3"/><circle cx="16" cy="20" r="3.2" fill="#a0a0a3"/></svg>
<svg class="abs" style="left:510px;top:1848px;width:26px;height:26px" viewBox="0 0 26 26"><path d="M24.5 1.5 L1.5 11.5 L12.5 13.5 L14.5 24.5 Z" stroke="#a0a0a3" stroke-width="2" fill="none" stroke-linejoin="round"/></svg>
<div class="abs" style="left:551px;top:1849px;width:2px;height:25px;background:#48484b"></div>
<svg class="abs" style="left:572px;top:1849px;width:23px;height:23px" viewBox="0 0 24 24"><rect x="0" y="0" width="24" height="24" rx="5.5" fill="#8e8e92"/><g stroke="#2a2a2d" stroke-width="1.9" stroke-linecap="round" fill="none"><path d="M12.2 5.5 L7 16.8"/><path d="M10.6 5.5 L16.6 17.8"/><path d="M5.2 14.6 H18.8"/><path d="M6.2 18.6 l-0.6 1"/></g></svg>
<div class="ui" style="left:608px;top:1848.4px;font-size:22.8px;line-height:25.47px;color:#dcdcde;font-weight:400">FavouriteThings</div>
<div class="ui" style="left:2775px;top:1848.8px;font-size:22.3px;line-height:24.91px;color:#a0a0a3;font-weight:700">Line: 34  Col: 6</div>
<div class="abs" style="left:2954px;top:1850px;width:2px;height:24px;background:#48484b"></div>
<svg class="abs" style="left:2973px;top:1848px;width:26px;height:26px" viewBox="0 0 26 26"><g stroke="#a0a0a3" stroke-width="2" fill="none"><rect x="1" y="1" width="24" height="24" rx="5"/></g><rect x="4" y="16" width="18" height="6" rx="2" fill="#a0a0a3"/></svg>
<div id="rim"></div>
</div>
</body></html>
